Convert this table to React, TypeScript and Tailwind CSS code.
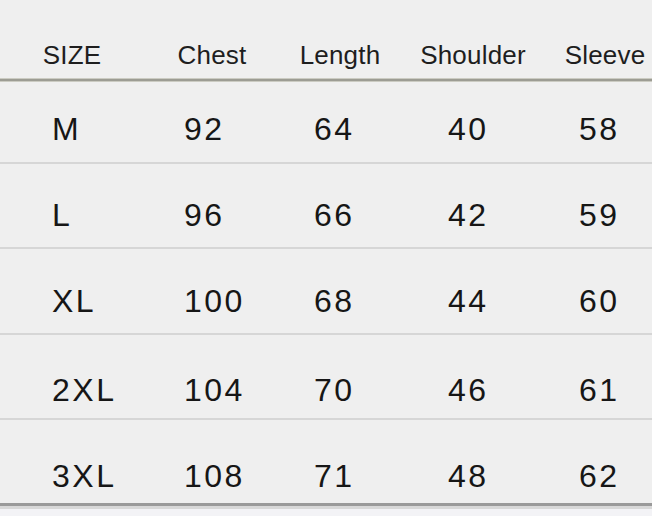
const headers = ['SIZE', 'Chest', 'Length', 'Shoulder', 'Sleeve'];

const rows = [
  { cells: ['M', '92', '64', '40', '58'], h: 'h-[82px]', pt: 'pt-[31px]' },
  { cells: ['L', '96', '66', '42', '59'], h: 'h-[85px]', pt: 'pt-[35px]' },
  { cells: ['XL', '100', '68', '44', '60'], h: 'h-[86px]', pt: 'pt-[36px]' },
  { cells: ['2XL', '104', '70', '46', '61'], h: 'h-[85px]', pt: 'pt-[39px]' },
  { cells: ['3XL', '108', '71', '48', '62'], h: 'h-[83px]', pt: 'pt-[40px]' },
];

// column widths shared by header and body
const colW = ['w-[144px]', 'w-[136px]', 'w-[120px]', 'w-[146px]', 'w-[118px]'];
const padL = ['pl-[52px]', 'pl-[40px]', 'pl-[34px]', 'pl-[48px]', 'pl-[33px]'];

export default function App() {
  return (
    <div className="w-[652px] h-[516px] overflow-hidden bg-[#efefef] text-[#161616] flex flex-col font-['Liberation_Sans',Arial,sans-serif]">
      {/* header */}
      <div className="h-[78px] shrink-0 flex items-end pb-[10px]">
        {headers.map((h, i) => (
          <div key={h} className={`${colW[i]} shrink-0 text-center text-[26px] leading-[26px] tracking-[0.2px] text-[#1e1e1e]`}>
            {h}
          </div>
        ))}
      </div>
      <div className="h-[4px] border-y border-[#cbcbc2] bg-[#9c9c93] shrink-0" />

      {/* body */}
      {rows.map((r, ri) => (
        <div
          key={r.cells[0]}
          className={`${r.h} shrink-0 flex items-start ${r.pt} ${
            ri === rows.length - 1 ? '' : 'border-b-2 border-[#d6d6d6]'
          }`}
        >
          {r.cells.map((c, i) => (
            <div
              key={i}
              className={`${colW[i]} ${padL[i]} shrink-0 text-[32px] leading-[32px] tracking-[2.5px]`}
            >
              {c}
            </div>
          ))}
        </div>
      ))}
      <div className="h-[3px] bg-[#9a9a9a] shrink-0" />
      <div className="h-[3px] bg-[#d8d8d8] shrink-0" />
      <div className="flex-1 bg-[#f3f3f6]" />
    </div>
  );
}
